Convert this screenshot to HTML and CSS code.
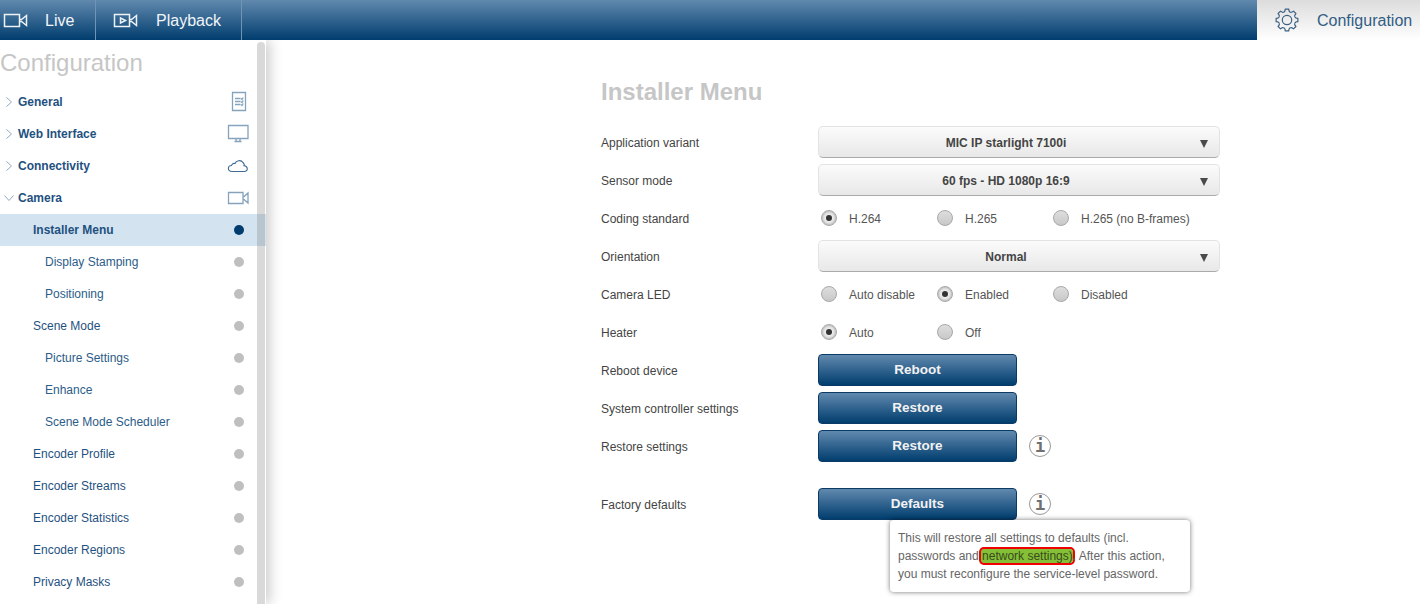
FILE: index.html
```html
<!DOCTYPE html>
<html lang="en">
<head>
<meta charset="utf-8">
<title>Installer Menu</title>
<link rel="stylesheet" href="styles.css">
</head>
<body>
<header class="topbar">
  <a class="tab tab-live">
    <svg class="tab-icon" width="26" height="16" viewBox="0 0 26 16"><path d="M1.500 2.500h15v12h-15zM16.500 7.500h2l5-4v10l-5-4h-2"/></svg>
    <span>Live</span>
  </a>
  <a class="tab tab-play">
    <svg class="tab-icon" width="26" height="16" viewBox="0 0 26 16"><path d="M1.500 2.500h15v12h-15zM16.500 7.500h2l5-4v10l-5-4h-2M7.500 6v5l5-2.500z"/></svg>
    <span>Playback</span>
  </a>
  <div class="topbar-fill"></div>
  <a class="tab-config">
    <svg class="gear" width="24" height="24" viewBox="0 0 24 24">
      <circle cx="12" cy="12" r="4.700"/>
      <path d="M8.710 4.050Q10 4 10.280 1.140H13.720Q14 4 15.290 4.050"/>
      <path transform="rotate(45 12 12)" d="M8.710 4.050Q10 4 10.280 1.140H13.720Q14 4 15.290 4.050"/>
      <path transform="rotate(90 12 12)" d="M8.710 4.050Q10 4 10.280 1.140H13.720Q14 4 15.290 4.050"/>
      <path transform="rotate(135 12 12)" d="M8.710 4.050Q10 4 10.280 1.140H13.720Q14 4 15.290 4.050"/>
      <path transform="rotate(180 12 12)" d="M8.710 4.050Q10 4 10.280 1.140H13.720Q14 4 15.290 4.050"/>
      <path transform="rotate(225 12 12)" d="M8.710 4.050Q10 4 10.280 1.140H13.720Q14 4 15.290 4.050"/>
      <path transform="rotate(270 12 12)" d="M8.710 4.050Q10 4 10.280 1.140H13.720Q14 4 15.290 4.050"/>
      <path transform="rotate(315 12 12)" d="M8.710 4.050Q10 4 10.280 1.140H13.720Q14 4 15.290 4.050"/>
    </svg>
    <span>Configuration</span>
  </a>
</header>
<div class="body-wrap">
  <aside class="sidebar">
    <h2 class="side-title">Configuration</h2>
    <nav class="side-nav">
      <a class="row parent"><svg class="chev" width="10" height="12" viewBox="0 0 10 12"><path d="M2.500 1.500l5 4.500-5 4.500"/></svg><span class="row-label">General</span>
        <svg class="row-icon" width="22" height="22" viewBox="0 0 22 22"><path d="M5.500 1.500h13v18h-13zM8 7.500h5.500M8 10.500h5.500M8 13.500h5.500M14 7.500l1 1 1.300-2M14 10.500l1 1 1.300-2M14 13.500l1 1 1.300-2"/></svg></a>
      <a class="row parent"><svg class="chev" width="10" height="12" viewBox="0 0 10 12"><path d="M2.500 1.500l5 4.500-5 4.500"/></svg><span class="row-label">Web Interface</span>
        <svg class="row-icon" width="22" height="22" viewBox="0 0 22 22"><path d="M1.500 2.500h19.500v13h-19.500zM9 15.500v2.500M13 15.500v2.500M7.500 18.500h7"/></svg></a>
      <a class="row parent"><svg class="chev" width="10" height="12" viewBox="0 0 10 12"><path d="M2.500 1.500l5 4.500-5 4.500"/></svg><span class="row-label">Connectivity</span>
        <svg class="row-icon icon-dark" width="22" height="22" viewBox="0 0 22 22"><path d="M5 16.500c-5 0-4.500-6 -.500-6 .500-1.500 2-2.500 3.500-2 1-3 6-4 8-1 1.500 1.500 1.500 3 1.200 3.200 3.700.3 4.500 5.800 0 5.800z"/></svg></a>
      <a class="row parent"><svg class="chev" width="10" height="12" viewBox="0 0 10 12"><path d="M.5 3.500l4.500 5 4.500-5"/></svg><span class="row-label">Camera</span>
        <svg class="row-icon" width="22" height="22" viewBox="0 0 22 22"><path d="M1.500 5.500h14.500v11h-14.500zM16 9.500h1l4-3.500v10l-4-3.500h-1"/></svg></a>
      <a class="row lvl1 active"><span class="row-label">Installer Menu</span><i class="dot"></i></a>
      <a class="row lvl2"><span class="row-label">Display Stamping</span><i class="dot"></i></a>
      <a class="row lvl2"><span class="row-label">Positioning</span><i class="dot"></i></a>
      <a class="row lvl1"><span class="row-label">Scene Mode</span><i class="dot"></i></a>
      <a class="row lvl2"><span class="row-label">Picture Settings</span><i class="dot"></i></a>
      <a class="row lvl2"><span class="row-label">Enhance</span><i class="dot"></i></a>
      <a class="row lvl2"><span class="row-label">Scene Mode Scheduler</span><i class="dot"></i></a>
      <a class="row lvl1"><span class="row-label">Encoder Profile</span><i class="dot"></i></a>
      <a class="row lvl1"><span class="row-label">Encoder Streams</span><i class="dot"></i></a>
      <a class="row lvl1"><span class="row-label">Encoder Statistics</span><i class="dot"></i></a>
      <a class="row lvl1"><span class="row-label">Encoder Regions</span><i class="dot"></i></a>
      <a class="row lvl1"><span class="row-label">Privacy Masks</span><i class="dot"></i></a>
    </nav>
    <div class="scrollbar"></div>
  </aside>
  <main class="content">
    <h1 class="page-title">Installer Menu</h1>
    <div class="form">
      <div class="form-row"><label>Application variant</label><div class="select"><span>MIC IP starlight 7100i</span><i class="caret"></i></div></div>
      <div class="form-row"><label>Sensor mode</label><div class="select"><span>60 fps - HD 1080p 16:9</span><i class="caret"></i></div></div>
      <div class="form-row"><label>Coding standard</label><div class="radios">
        <div class="radio on"><i></i><span>H.264</span></div>
        <div class="radio"><i></i><span>H.265</span></div>
        <div class="radio"><i></i><span>H.265 (no B-frames)</span></div></div></div>
      <div class="form-row"><label>Orientation</label><div class="select"><span>Normal</span><i class="caret"></i></div></div>
      <div class="form-row"><label>Camera LED</label><div class="radios">
        <div class="radio"><i></i><span>Auto disable</span></div>
        <div class="radio on"><i></i><span>Enabled</span></div>
        <div class="radio"><i></i><span>Disabled</span></div></div></div>
      <div class="form-row"><label>Heater</label><div class="radios">
        <div class="radio on"><i></i><span>Auto</span></div>
        <div class="radio"><i></i><span>Off</span></div></div></div>
      <div class="form-row"><label>Reboot device</label><button class="btn">Reboot</button></div>
      <div class="form-row"><label>System controller settings</label><button class="btn">Restore</button></div>
      <div class="form-row"><label>Restore settings</label><button class="btn">Restore</button>
        <span class="info">i</span></div>
      <div class="form-row factory"><label>Factory defaults</label><button class="btn">Defaults</button>
        <span class="info">i</span>
        <div class="tooltip">This will restore all settings to defaults (incl. passwords and <mark class="hl">network settings)</mark>. After this action, you must reconfigure the service-level password.</div>
      </div>
    </div>
  </main>
</div>
</body>
</html>
```

FILE: styles.css
```css
* { box-sizing: border-box; }
html, body { margin: 0; height: 100%; overflow: hidden; }
body {
  display: flex;
  flex-direction: column;
  background: #fff;
  font-family: "Liberation Sans", Arial, sans-serif;
  font-size: 12px;
  color: #444;
}

/* Top bar */
.topbar {
  flex: 0 0 40px;
  display: flex;
  background: linear-gradient(#6189ae, #003d6e);
  color: #fff;
  font-size: 16px;
}
.tab {
  display: flex;
  align-items: center;
  border-right: 1px solid #6f94b6;
  color: #f1f5f9;
}
.tab span, .tab-config span { padding-top: 2px; }
.tab-live { width: 96px; padding-left: 3px; gap: 16px; }
.tab-play { width: 146px; padding-left: 17px; gap: 17px; }
.tab-icon { fill: none; stroke: #edf2f7; stroke-width: 1.5; }
.topbar-fill { flex: 1; }
.tab-config {
  width: 163px;
  display: flex;
  align-items: center;
  gap: 18px;
  padding-left: 18px;
  background: linear-gradient(#dcdcdc, #fff);
  color: #315d85;
}
.gear { fill: none; stroke: #3c6184; stroke-width: 1.2; stroke-linejoin: round; }

.body-wrap { flex: 1; display: flex; min-height: 0; }

/* Sidebar */
.sidebar {
  position: relative;
  flex: 0 0 266px;
  overflow: hidden;
  box-shadow: 4px 0 12px rgba(0, 0, 0, .2);
  clip-path: inset(0 -20px 0 0);
  background: #fff;
}
.side-title {
  margin: 0;
  height: 46px;
  padding-top: 9px;
  font-size: 24px;
  line-height: 28px;
  font-weight: 400;
  color: #c6c6c6;
}
.row {
  display: flex;
  align-items: center;
  height: 32px;
  color: #1f5180;
}
.row-label { flex: 1; }
.parent { padding-left: 4px; padding-right: 15px; font-weight: 700; }
.parent .row-label { margin-left: 4px; }
.lvl1 { padding-left: 33px; padding-right: 22.500px; }
.lvl2 { padding-left: 45px; padding-right: 22.500px; color: #2c5c88; }
.active { background: #d3e4f0; font-weight: 700; }
.chev { fill: none; stroke: #8fa9c1; stroke-width: 1; }
.row-icon { fill: none; stroke: #86a3bd; stroke-width: 1.3; margin-right: 2px; }
.icon-dark { stroke: #3f6b92; stroke-width: 1.1; }
.dot { width: 10px; height: 10px; border-radius: 50%; background: #bfbfbf; }
.active .dot { background: #003d6e; }
.scrollbar {
  position: absolute;
  top: 2px;
  right: 1px;
  bottom: 0;
  width: 8px;
  border-radius: 4px 4px 0 0;
  background: rgba(120, 120, 120, .28);
}

/* Content */
.content { flex: 1; padding-left: 335px; min-width: 0; }
.page-title {
  margin: 0;
  height: 83px;
  padding-top: 37px;
  font-size: 24px;
  line-height: 30px;
  color: #c6c6c6;
}
.form-row {
  position: relative;
  display: flex;
  align-items: center;
  height: 38px;
}
.form-row label { flex: 0 0 217px; padding-top: 2px; }
.factory { margin-top: 20px; }

.select {
  position: relative;
  width: 402px;
  height: 32px;
  display: flex;
  align-items: center;
  justify-content: center;
  border: 1px solid #e3e3e3;
  border-bottom-color: #aaa;
  border-radius: 5px;
  background: linear-gradient(#fbfbfb, #e8e8e8);
  font-weight: 700;
  color: #444;
  padding: 2px 26px 0 0;
}
.caret {
  position: absolute;
  right: 11px;
  top: 13px;
  border-left: 4.500px solid transparent;
  border-right: 4.500px solid transparent;
  border-top: 8px solid #4a4a4a;
}
.radios { display: flex; padding-left: 3px; }
.radio { width: 116px; display: flex; align-items: center; gap: 12px; color: #555; white-space: nowrap; }
.radio span { padding-top: 2px; }
.radio i {
  position: relative;
  flex: 0 0 16px;
  height: 16px;
  border-radius: 50%;
  border: 1px solid #a8a8a8;
  background: linear-gradient(#dedede, #c8c8c8);
}
.radio.on i::after {
  content: "";
  position: absolute;
  left: 4px;
  top: 4px;
  width: 6px;
  height: 6px;
  border-radius: 50%;
  background: #333;
}
.radio.on i { background: #ececec; box-shadow: inset 0 0 3px #888; }

.btn {
  width: 199px;
  height: 32px;
  padding: 0 0 2px;
  border: 1px solid #0a3a66;
  border-radius: 4px;
  background: linear-gradient(#6189ae, #003d6e);
  color: #f2f2f2;
  font: 700 13.500px "Liberation Sans", Arial, sans-serif;
}
.info {
  width: 22px;
  height: 22px;
  margin-left: 12px;
  border: 1px solid #999;
  border-radius: 50%;
  font: 700 17px/20px "DejaVu Sans Mono", monospace;
  text-align: center;
  color: #707070;
}
.tooltip {
  position: absolute;
  left: 289px;
  top: 35px;
  width: 300px;
  height: 72px;
  padding: 9px 8px;
  border-radius: 4px;
  background: #fff;
  box-shadow: 0 0 5px rgba(0, 0, 0, .55);
  line-height: 18px;
  color: #666;
}
.hl {
  border-radius: 3px;
  box-shadow: -1px 0 0 0 #84c035, -1px 0 0 2px #f00000, 0 0 0 2px #f00000;
  background: #84c035;
  color: #3a4a20;
}
```
